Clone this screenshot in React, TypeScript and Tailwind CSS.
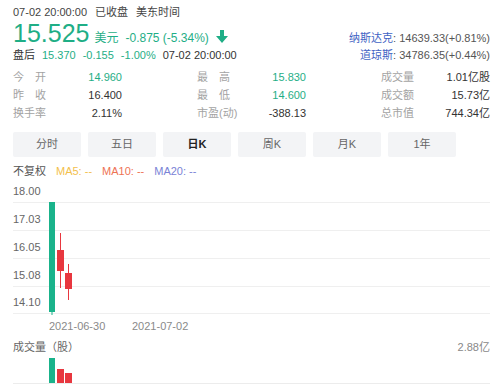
type Stat = { label: string; value: string; green?: boolean };

const statRows: Stat[][] = [
  [
    { label: '今 开', value: '14.960', green: true },
    { label: '最 高', value: '15.830', green: true },
    { label: '成交量', value: '1.01亿股' },
  ],
  [
    { label: '昨 收', value: '16.400' },
    { label: '最 低', value: '14.600', green: true },
    { label: '成交额', value: '15.73亿' },
  ],
  [
    { label: '换手率', value: '2.11%' },
    { label: '市盈(动)', value: '-388.13' },
    { label: '总市值', value: '744.34亿' },
  ],
];

const tabs = ['分时', '五日', '日K', '周K', '月K', '1年'];

const yTicks = [
  { label: '18.00', y: 22 },
  { label: '17.03', y: 50 },
  { label: '16.05', y: 78 },
  { label: '15.08', y: 106 },
  { label: '14.10', y: 133 },
];

function StatLabel({ text }: { text: string }) {
  if (text.includes(' ')) {
    const [a, b] = text.split(' ');
    return (
      <span className="flex w-[33px] justify-between text-[#a3a3a3]">
        <span>{a}</span>
        <span>{b}</span>
      </span>
    );
  }
  return <span className="text-[#a3a3a3]">{text}</span>;
}

function DownArrow() {
  return (
    <svg width="12" height="13" viewBox="0 0 12 13" className="mb-[4px] ml-[7px] self-end">
      <path d="M4 0h4v6h4l-6 7l-6-7h4z" fill="#1fae86" />
    </svg>
  );
}

function KChart() {
  return (
    <svg width="477" height="159" className="mt-[1px] block">
      {yTicks.map((t) => (
        <g key={t.label}>
          <line x1="0" x2="477" y1={t.y + 0.5} y2={t.y + 0.5} stroke="#efefef" strokeWidth="1" />
          <text x="0" y={t.y - 7} fontSize="11" fill="#666" fontFamily="'Liberation Sans', sans-serif">
            {t.label}
          </text>
        </g>
      ))}
      {/* candles */}
      <rect x="36" y="22" width="6" height="110" fill="#1ab38b" />
      <line x1="39" x2="39" y1="130" y2="135" stroke="#1ab38b" strokeWidth="1" />
      <line x1="47.5" x2="47.5" y1="53" y2="108" stroke="#e8373f" strokeWidth="1" />
      <rect x="44" y="70" width="7" height="21" fill="#e8373f" />
      <line x1="55.5" x2="55.5" y1="84" y2="120" stroke="#e8373f" strokeWidth="1" />
      <rect x="52" y="93" width="7" height="16" fill="#e8373f" />
      <text x="36" y="150" fontSize="11" fill="#8a8a8a" fontFamily="'Liberation Sans', sans-serif">
        2021-06-30
      </text>
      <text x="119" y="150" fontSize="11" fill="#8a8a8a" fontFamily="'Liberation Sans', sans-serif">
        2021-07-02
      </text>
    </svg>
  );
}

function VolumeChart() {
  return (
    <svg width="477" height="30" className="block">
      <rect x="36" y="3" width="6" height="25" fill="#1ab38b" />
      <rect x="44" y="14" width="7" height="14" fill="#e8373f" />
      <rect x="52" y="18" width="7" height="10" fill="#e8373f" />
      <line x1="0" x2="477" y1="28.5" y2="28.5" stroke="#ececec" strokeWidth="1" />
    </svg>
  );
}

export default function App() {
  return (
    <div className="h-[390px] w-[500px] overflow-hidden bg-white pl-[13px] pr-[10px] pt-[5px] font-['Liberation_Sans','Noto_Sans_CJK_SC',sans-serif] text-[11px] text-[#333]">
      <div className="flex h-[14px] items-center gap-[8px] leading-[14px] text-[#444]">
        <span>07-02 20:00:00</span>
        <span>已收盘</span>
        <span>美东时间</span>
      </div>

      <div className="flex items-end justify-between">
        <div>
          <div className="flex h-[28px] items-baseline text-[#1fae86]">
            <span className="text-[25px] leading-[28px]">15.525</span>
            <span className="ml-[5px] text-[12px]">美元</span>
            <span className="ml-[7px] text-[12px]">-0.875 (-5.34%)</span>
            <DownArrow />
          </div>
          <div className="flex h-[17px] items-center gap-[7px] leading-[17px]">
            <span className="text-[#333]">盘后</span>
            <span className="text-[#1fae86]">15.370</span>
            <span className="text-[#1fae86]">-0.155</span>
            <span className="text-[#1fae86]">-1.00%</span>
            <span className="text-[#333]">07-02 20:00:00</span>
          </div>
        </div>
        <div className="text-right leading-[17px] text-[#555]">
          <div className="h-[17px]">
            <span className="text-[#3f63c4]">纳斯达克</span>: 14639.33(+0.81%)
          </div>
          <div className="h-[17px]">
            <span className="text-[#3f63c4]">道琼斯</span>: 34786.35(+0.44%)
          </div>
        </div>
      </div>

      <div className="mt-[4px] w-[477px]">
        {statRows.map((row, i) => (
          <div key={i} className="flex h-[18px] items-center justify-between leading-[18px]">
            {row.map((s) => (
              <div key={s.label} className="flex w-[109px] justify-between">
                <StatLabel text={s.label} />
                <span className={s.green ? 'text-[#1fae86]' : 'text-[#333]'}>{s.value}</span>
              </div>
            ))}
          </div>
        ))}
      </div>

      <div className="mt-[10px] flex gap-[7px]">
        {tabs.map((t) => (
          <div
            key={t}
            className={`flex h-[25px] w-[68px] items-center justify-center rounded-[2px] bg-[#f3f4f6] ${
              t === '日K' ? 'font-bold text-[#222]' : 'text-[#666]'
            }`}
          >
            {t}
          </div>
        ))}
      </div>

      <div className="mt-[6px] flex h-[16px] items-center gap-[10px] leading-[16px]">
        <span className="text-[#555]">不复权</span>
        <span className="text-[#f3bf4c]">MA5: --</span>
        <span className="text-[#ee7354]">MA10: --</span>
        <span className="text-[#7a83d6]">MA20: --</span>
      </div>

      <KChart />

      <div className="flex h-[16px] w-[477px] items-center justify-between leading-[16px]">
        <span className="text-[#666]">成交量（股）</span>
        <span className="text-[#888]">2.88亿</span>
      </div>
      <VolumeChart />
    </div>
  );
}
